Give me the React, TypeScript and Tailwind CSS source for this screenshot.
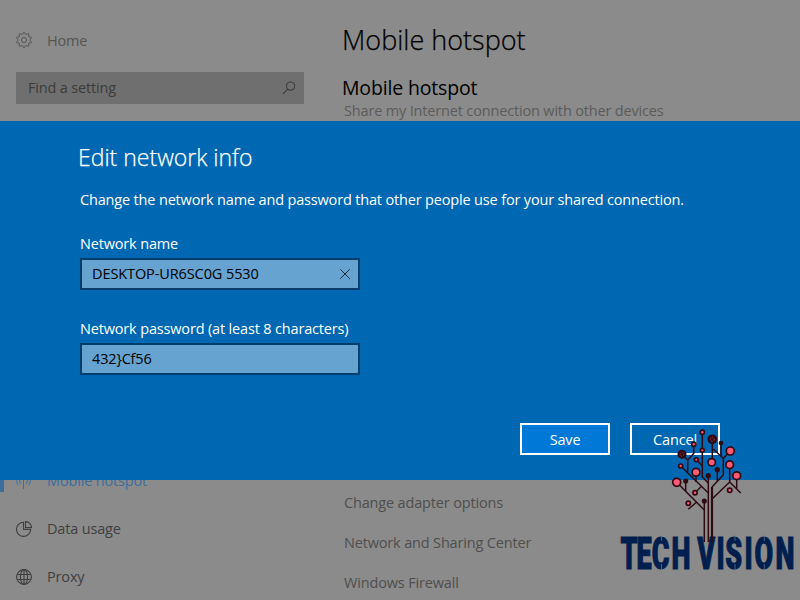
import type { ReactNode } from "react";

const gearPoints = Array.from({ length: 40 }, (_, i) => {
  const tooth = i % 4 < 2;
  const radius = tooth ? 7.6 : 5.9;
  const angle = ((i - 0.5) * Math.PI) / 20 - Math.PI / 2;
  return `${(8 + radius * Math.cos(angle)).toFixed(2)},${(8 + radius * Math.sin(angle)).toFixed(2)}`;
}).join(" ");

function GearIcon() {
  return (
    <svg viewBox="0 0 16 16" className="h-4 w-4" fill="none" stroke="currentColor">
      <polygon points={gearPoints} strokeLinejoin="round" />
      <circle cx="8" cy="8" r="2.5" />
    </svg>
  );
}

function SearchIcon() {
  return (
    <svg viewBox="0 0 14 14" className="h-3.5 w-3.5" fill="none" stroke="currentColor" strokeWidth="1.1">
      <circle cx="8.6" cy="5.1" r="4.1" />
      <path d="M5.6 8.1 1 12.8" />
    </svg>
  );
}

function HotspotIcon() {
  return (
    <svg viewBox="0 0 16 16" className="h-4 w-4" fill="none" stroke="currentColor">
      <path d="M7.5 7v9M5 5a4 4 0 0 0 0 6M10 5a4 4 0 0 1 0 6M2.5 2.5a7.5 7.5 0 0 0 0 10M12.5 2.5a7.5 7.5 0 0 1 0 10" />
    </svg>
  );
}

function PieIcon() {
  return (
    <svg viewBox="0 0 16 16" className="h-4 w-4" fill="none" stroke="currentColor" strokeWidth="1.1">
      <path d="M7.5 1.2a7.1 7.1 0 1 0 7.2 7.2H7.5Z" />
      <path d="M9.5.6v5.9h6A6 6 0 0 0 9.5.6Z" />
    </svg>
  );
}

function GlobeIcon() {
  return (
    <svg viewBox="0 0 16 16" className="h-4 w-4" fill="none" stroke="currentColor" strokeWidth="1.1">
      <circle cx="8" cy="8" r="7.4" />
      <ellipse cx="8" cy="8" rx="3.6" ry="7.4" />
      <path d="M8 .6v14.8M1.2 5.5h13.6M1.2 10.5h13.6" />
    </svg>
  );
}

type NavItemProps = {
  icon: ReactNode;
  label: string;
  active?: boolean;
};

function NavItem({ icon, label, active }: NavItemProps) {
  return (
    <li
      className={
        active
          ? "flex h-12 items-center text-[#3c6e9c]"
          : "flex h-12 items-center text-[#3f3f3f]"
      }
    >
      <span className={active ? "-mt-0.5 h-6 w-1 bg-[#3c6e9c]" : "h-6 w-1"} />
      <span className="ml-3">{icon}</span>
      <span className="ml-[15px]">{label}</span>
    </li>
  );
}

type Node = { x: number; y: number; r: number; kind: "red" | "ring" | "dark" };

const nodes: Node[] = [
  { x: 32.3, y: 4.3, r: 2.1, kind: "red" },
  { x: 23.7, y: 16.3, r: 2.1, kind: "red" },
  { x: 42.3, y: 11.3, r: 4, kind: "ring" },
  { x: 51, y: 15, r: 1.5, kind: "dark" },
  { x: 60.3, y: 23, r: 4, kind: "red" },
  { x: 32.3, y: 22.3, r: 1.9, kind: "red" },
  { x: 12, y: 26.3, r: 3.7, kind: "ring" },
  { x: 41.7, y: 34.3, r: 3.7, kind: "red" },
  { x: 26.3, y: 31.7, r: 1.9, kind: "red" },
  { x: 10.7, y: 38, r: 2, kind: "red" },
  { x: 59.7, y: 36.7, r: 3.8, kind: "red" },
  { x: 26, y: 44.3, r: 3.9, kind: "red" },
  { x: 38.3, y: 47.7, r: 1.8, kind: "dark" },
  { x: 47.3, y: 41.7, r: 1.8, kind: "dark" },
  { x: 66.7, y: 47.7, r: 3.9, kind: "red" },
  { x: 6.7, y: 54.3, r: 4, kind: "red" },
  { x: 15.7, y: 53, r: 1.7, kind: "dark" },
  { x: 25, y: 64.7, r: 2.1, kind: "red" },
  { x: 18.3, y: 75.3, r: 2.1, kind: "red" },
  { x: 34.3, y: 73, r: 1.7, kind: "dark" },
  { x: 59.7, y: 62.3, r: 2.2, kind: "red" },
];

const branches = [
  "M34.3 73v41",
  "M38.3 48v66",
  "M32.3 4v45l6 6",
  "M26.3 31.7l6 6",
  "M10.7 38l27.6 27",
  "M12 26.3l5.7 5.7v12M23.7 16v9.5L17.7 32",
  "M26 44v10",
  "M25 64.7l6-6",
  "M6.7 54.3 34.3 82",
  "M15.7 53v10.5",
  "M18.3 81.3l8.4-7.3",
  "M42.3 11v23M43.3 21l10 9.5M60.3 23l-7 7.5V47L42 59",
  "M51 15v13",
  "M47.3 42v11",
  "M59.7 37v17L42 71M59.7 54l11 11",
  "M66.7 48v12.5",
];

// left edges of the letters, in pixels of the artwork
const letterX = [0.6, 16.5, 31.8, 51.6, 70, 77.2, 96.4, 105.3, 124.4, 134.4, 155.4];
const letterScale = 0.6;

function TechVisionLogo() {
  return (
    <svg viewBox="0 0 180 172" className="absolute left-[620px] top-[428px] h-[172px] w-[180px]">
      <text
        transform={`scale(${letterScale} 1)`}
        x={letterX.map((x) => (x / letterScale).toFixed(1)).join(" ")}
        y="141"
        className="font-['Roboto',sans-serif] text-[45px] font-black tracking-normal"
        fill="#001f4e"
        stroke="#001f4e"
        strokeWidth="1.1"
      >
        TECH VISION
      </text>
      <path
        d="M41.5 107v6M41.5 136v6M115 107v6M115 136v6M144.3 107v6M144.3 136v6"
        stroke="#6f7886"
        strokeWidth="0.7"
      />
      <g transform="translate(50 0)" fill="none" stroke="#300a12" strokeWidth="1.5">
        {branches.map((d) => (
          <path key={d} d={d} />
        ))}
        <path d="M42 59v55" strokeWidth="2.2" />
        {nodes.map((node) => (
          <g key={`${node.x}-${node.y}`}>
            <circle
              cx={node.x}
              cy={node.y}
              r={node.r}
              fill={node.kind === "red" ? "#ff5a73" : "#300a12"}
              strokeWidth="1.7"
            />
            {node.kind === "ring" && (
              <circle
                cx={node.x}
                cy={node.y}
                r={node.r * 0.5}
                stroke="#a83a4c"
                strokeWidth="0.9"
                strokeDasharray="1.4 1.2"
              />
            )}
          </g>
        ))}
      </g>
    </svg>
  );
}

function EditNetworkDialog() {
  return (
    <section className="absolute inset-x-0 top-[121px] flex h-[359px] flex-col bg-[#0067b3] px-20 text-white">
      <h2 className="-ml-0.5 mt-5 text-[23px] leading-8 font-light tracking-normal [-webkit-text-stroke:0.25px]">
        Edit network info
      </h2>
      <p className="mt-[17px] whitespace-nowrap leading-5">
        Change the network name and password that other people use for your shared connection.
      </p>

      <label className="mt-6 leading-5">Network name</label>
      <div className="mt-1 flex h-8 w-[280px] items-center justify-between border-2 border-[#003e6b] bg-[#66a3d1] pr-2 pl-2.5 text-black">
        <span className="tracking-[-0.1px]">DESKTOP-UR6SC0G 5530</span>
        <svg viewBox="0 0 10 10" className="h-2.5 w-2.5" stroke="#1b2c38">
          <path d="M.3.3l9.4 9.4M9.7.3.3 9.7" />
        </svg>
      </div>

      <label className="mt-[29px] leading-5">Network password (at least 8 characters)</label>
      <div className="mt-1 flex h-8 w-[280px] items-center border-2 border-[#003e6b] bg-[#66a3d1] pl-2.5 text-black">
        <span>432&#125;Cf56</span>
      </div>

      <div className="mt-12 flex justify-end gap-5">
        <button type="button" className="h-8 w-[90px] border-2 border-white bg-[#0078d7] pt-0.5">
          Save
        </button>
        <button type="button" className="h-8 w-[90px] border-2 border-white pt-0.5">
          Cancel
        </button>
      </div>
    </section>
  );
}

export default function App() {
  return (
    <div className="relative flex h-[600px] w-[800px] overflow-hidden bg-[#8b8b8b] font-['Open_Sans','Noto_Sans',sans-serif] text-[14.5px] tracking-[-0.165px]">
      <aside className="w-[328px] pt-6">
        <div className="flex h-8 items-center pl-4 text-[#555555]">
          <GearIcon />
          <span className="ml-[15px] pt-px">Home</span>
        </div>
        <div className="mt-4 ml-4 flex h-8 w-72 items-center justify-between bg-[#6f6f6f] pr-2 pl-3 text-[#3c3c3c]">
          <span>Find a setting</span>
          <SearchIcon />
        </div>
        <ul className="mt-[353px]">
          <NavItem active icon={<HotspotIcon />} label="Mobile hotspot" />
          <NavItem icon={<PieIcon />} label="Data usage" />
          <NavItem icon={<GlobeIcon />} label="Proxy" />
        </ul>
      </aside>

      <main className="flex flex-1 flex-col pl-4 whitespace-nowrap text-[#5b5b5b]">
        <h1 className="-ml-0.5 mt-5 text-[27px] leading-10 font-light tracking-normal text-black [-webkit-text-stroke:0.25px]">
          Mobile hotspot
        </h1>
        <h2 className="-ml-0.5 mt-3.5 text-[19.5px] leading-7 text-black">Mobile hotspot</h2>
        <p className="-mt-px leading-5">Share my Internet connection with other devices</p>
        <ul className="mt-[362px] leading-10 text-[#4f4f4f]">
          <li>Change adapter options</li>
          <li>Network and Sharing Center</li>
          <li>Windows Firewall</li>
        </ul>
      </main>

      <EditNetworkDialog />
      <TechVisionLogo />
    </div>
  );
}
